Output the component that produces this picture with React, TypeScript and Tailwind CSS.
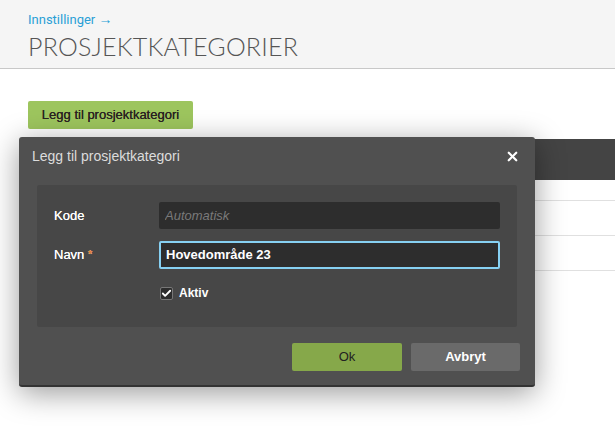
import { Check, X } from 'lucide-react'

const body = { fontFamily: '"Liberation Sans", Arial, sans-serif' }

export default function App() {
  return (
    <div className="relative w-[615px] h-[430px] bg-white overflow-hidden" style={body}>
      {/* Header */}
      <div className="h-[69px] bg-[#f5f5f5] border-b border-[#c8c8c8] px-[28px] pt-[11px]">
        <a className="block text-[13px] leading-[16px] text-[#2a9fd6]" style={{ fontFamily: 'Roboto, sans-serif' }}>
          Innstillinger <span className="text-[14px]">→</span>
        </a>
        <h1
          className="mt-[4px] text-[25px] leading-[29px] font-light tracking-[0.2px] text-[#555]"
          style={{ fontFamily: 'Lato, sans-serif' }}
        >
          PROSJEKTKATEGORIER
        </h1>
      </div>

      {/* Page content */}
      <div className="pl-[28px] pt-[32px]">
        <button className="w-[165px] h-[28px] bg-[#9dc55e] rounded-[2px] text-[13px] text-[#2a2222] [text-shadow:0_0_0.4px_#2a2222]">
          Legg til prosjektkategori
        </button>
        <div className="mt-[10px]">
          <div className="h-[41px] bg-[#444]" />
          <div className="h-[21px] border-b border-[#e0e0e0]" />
          <div className="h-[35px] border-b border-[#e0e0e0]" />
          <div className="h-[35px] border-b border-[#e0e0e0]" />
        </div>
      </div>

      {/* Dialog */}
      <div className="absolute left-[19px] top-[137px] w-[516px] h-[250px] bg-[#505050] rounded-[3px] border-b-2 border-[#333] shadow-[0_6px_30px_rgba(0,0,0,0.4)] flex flex-col">
        <div className="h-[38px] flex items-center justify-between pl-[13px] pr-[15px]">
          <span className="text-[14px] text-[#dcdcdc]">Legg til prosjektkategori</span>
          <X size={15} strokeWidth={3.5} className="text-white" />
        </div>
        <div className="mx-[18px] mt-[10px] h-[142px] bg-[#474747] rounded-[2px] pl-[17px] pr-[17px] pt-[17px]">
          <div className="flex items-center h-[27px]">
            <label className="w-[105px] text-[13px] text-white [text-shadow:0_0_0.4px_#fff]">Kode</label>
            <input
              placeholder="Automatisk"
              className="flex-1 h-[27px] bg-[#2d2d2d] rounded-[2px] px-[6px] text-[13px] italic text-white placeholder-[#7a7a7a] outline-none"
            />
          </div>
          <div className="flex items-center h-[29px] mt-[11px]">
            <label className="w-[105px] text-[13px] text-white [text-shadow:0_0_0.4px_#fff]">
              Navn <span className="text-[11px] align-[1px] font-bold text-[#e0762a]">*</span>
            </label>
            <input
              defaultValue="Hovedområde 23"
              className="flex-1 h-[28px] bg-[#2d2d2d] border-2 border-[#86d0f2] rounded-[2px] px-[5px] text-[13px] font-bold text-white outline-none"
            />
          </div>
          <div className="flex items-center mt-[15px] pl-[106px] gap-[6px]">
            <span className="w-[13px] h-[13px] rounded-[2px] border border-[#777] bg-[#2d2d2d] flex items-center justify-center">
              <Check size={11} strokeWidth={4} className="text-white" />
            </span>
            <span className="text-[12px] font-bold text-white">Aktiv</span>
          </div>
        </div>
        <div className="flex justify-end gap-[9px] pr-[15px] mt-[16px]">
          <button className="w-[110px] h-[28px] bg-[#86a84a] rounded-[2px] text-[13px] text-[#222]">Ok</button>
          <button className="w-[109px] h-[28px] bg-[#6a6a6a] rounded-[2px] text-[13px] font-bold text-white">Avbryt</button>
        </div>
      </div>
    </div>
  )
}
